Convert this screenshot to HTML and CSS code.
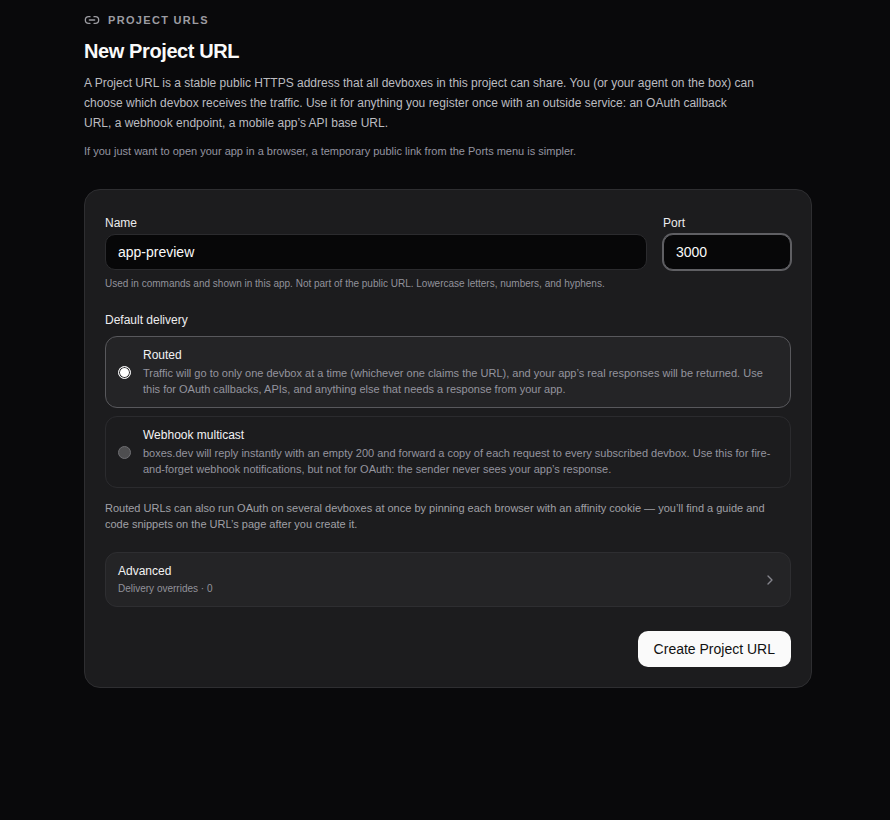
FILE: index.html
```html
<!DOCTYPE html>
<html>
<head>
  <title>New Project URL</title>
  <link rel="stylesheet" href="styles.css">
</head>
<body>
  <main class="page">
    <div class="eyebrow">
      <svg class="link-icon" width="16" height="16" viewBox="0 0 24 24" fill="none" stroke="currentColor" stroke-width="2" stroke-linecap="round" stroke-linejoin="round">
        <path d="M9 17H7A5 5 0 0 1 7 7h2"/>
        <path d="M15 7h2a5 5 0 1 1 0 10h-2"/>
        <line x1="8" y1="12" x2="16" y2="12"/>
      </svg>
      <span>PROJECT URLS</span>
    </div>
    <h1>New Project URL</h1>
    <p class="intro">A Project URL is a stable public HTTPS address that all devboxes in this project can share. You (or your agent on the box) can choose which devbox receives the traffic. Use it for anything you register once with an outside service: an OAuth callback URL, a webhook endpoint, a mobile app’s API base URL.</p>
    <p class="hint">If you just want to open your app in a browser, a temporary public link from the Ports menu is simpler.</p>

    <form class="card">
      <div class="fields">
        <div class="field name">
          <label>Name</label>
          <input class="input" type="text" value="app-preview">
        </div>
        <div class="field port">
          <label>Port</label>
          <input class="input focused" type="text" value="3000">
        </div>
      </div>
      <p class="help">Used in commands and shown in this app. Not part of the public URL. Lowercase letters, numbers, and hyphens.</p>

      <div class="section-label">Default delivery</div>
      <div class="options">
        <div class="option selected">
          <span class="radio"></span>
          <div class="option-text">
            <div class="option-title">Routed</div>
            <div class="option-desc">Traffic will go to only one devbox at a time (whichever one claims the URL), and your app’s real responses will be returned. Use this for OAuth callbacks, APIs, and anything else that needs a response from your app.</div>
          </div>
        </div>
        <div class="option">
          <span class="radio"></span>
          <div class="option-text">
            <div class="option-title">Webhook multicast</div>
            <div class="option-desc">boxes.dev will reply instantly with an empty 200 and forward a copy of each request to every subscribed devbox. Use this for fire-and-forget webhook notifications, but not for OAuth: the sender never sees your app’s response.</div>
          </div>
        </div>
      </div>
      <p class="note">Routed URLs can also run OAuth on several devboxes at once by pinning each browser with an affinity cookie — you’ll find a guide and code snippets on the URL’s page after you create it.</p>

      <div class="advanced">
        <div>
          <div class="advanced-title">Advanced</div>
          <div class="advanced-sub">Delivery overrides · 0</div>
        </div>
        <svg width="16" height="16" viewBox="0 0 24 24" fill="none" stroke="currentColor" stroke-width="2" stroke-linecap="round" stroke-linejoin="round">
          <path d="m9 18 6-6-6-6"/>
        </svg>
      </div>

      <div class="actions">
        <button class="create" type="button">Create Project URL</button>
      </div>
    </form>
  </main>
</body>
</html>
```

FILE: styles.css
```css
* {
  box-sizing: border-box;
}
body {
  margin: 0;
  background-color: #09090b;
  color: #fafafa;
  font-family: "Liberation Sans", Arial, sans-serif;
}
.page {
  width: 728px;
  margin-left: 84px;
  padding-top: 12px;
  padding-bottom: 132px;
}
.eyebrow {
  display: flex;
  align-items: center;
  gap: 8px;
  height: 16px;
  color: #9c9ca2;
  font-size: 11px;
  font-weight: 700;
  letter-spacing: 0.12em;
}
h1 {
  margin: 9px 0 0;
  font-size: 20px;
  line-height: 28px;
  font-weight: 700;
  letter-spacing: -0.02em;
}
.intro {
  max-width: 672px;
  margin: 8px 0 0;
  font-size: 12px;
  line-height: 20px;
  color: #bcbcc0;
}
.hint {
  margin: 10px 0 0;
  font-size: 11px;
  line-height: 16px;
  color: #9494a0;
}
.card {
  margin-top: 30px;
  padding: 20px;
  background-color: #1c1c1e;
  border: 1px solid #2e2e31;
  border-radius: 16px;
}
.fields {
  display: flex;
  gap: 16px;
}
.field {
  display: flex;
  flex-direction: column;
}
.name {
  flex: 1;
}
.port {
  width: 128px;
}
.field label {
  font-size: 12px;
  line-height: 16px;
  height: 24px;
  padding-top: 5px;
  color: #ececee;
}
.input {
  height: 36px;
  width: 100%;
  padding: 0 12px;
  background-color: #070708;
  border: 1px solid #2b2b2e;
  border-radius: 10px;
  color: #fafafa;
  font-family: inherit;
  font-size: 14px;
  outline: none;
}
.focused {
  border-color: #5f5f63;
  box-shadow: 0 0 0 1px #5f5f63;
}
.help {
  margin: 6px 0 0;
  font-size: 10px;
  line-height: 16px;
  color: #92929b;
}
.section-label {
  margin-top: 20px;
  font-size: 12px;
  line-height: 16px;
  color: #ececee;
}
.options {
  display: flex;
  flex-direction: column;
  gap: 8px;
  margin-top: 8px;
}
.option {
  display: flex;
  align-items: center;
  gap: 12px;
  height: 72px;
  padding: 0 12px;
  border: 1px solid #2b2b2e;
  border-radius: 12px;
}
.option.selected {
  background-color: #242426;
  border-color: #58585c;
}
.radio {
  flex: none;
  width: 13px;
  height: 13px;
  border-radius: 50%;
  background-color: #4e4e50;
  border: 1px solid #6e6e72;
}
.selected .radio {
  background-color: #fff;
  border: 1px solid #f4f4f5;
  box-shadow: inset 0 0 0 1px #2c2c2e;
}
.option-title {
  font-size: 12px;
  line-height: 16px;
  color: #f2f2f3;
}
.option-desc {
  margin-top: 2px;
  font-size: 11px;
  line-height: 16px;
  color: #94949e;
}
.note {
  margin: 12px 0 0;
  font-size: 11px;
  line-height: 16px;
  color: #a0a0a6;
}
.advanced {
  display: flex;
  justify-content: space-between;
  align-items: center;
  height: 55px;
  margin-top: 20px;
  padding: 0 12px;
  background-color: #242426;
  border: 1px solid #2e2e31;
  border-radius: 12px;
  color: #85858c;
}
.advanced-title {
  font-size: 12px;
  line-height: 16px;
  color: #f2f2f3;
}
.advanced-sub {
  margin-top: 2px;
  font-size: 10px;
  line-height: 16px;
  color: #92929b;
}
.actions {
  display: flex;
  justify-content: flex-end;
  margin-top: 24px;
}
.create {
  height: 36px;
  padding: 0 16px;
  background-color: #fafafa;
  border: none;
  border-radius: 10px;
  color: #111;
  font-family: inherit;
  font-size: 14px;
}
```
